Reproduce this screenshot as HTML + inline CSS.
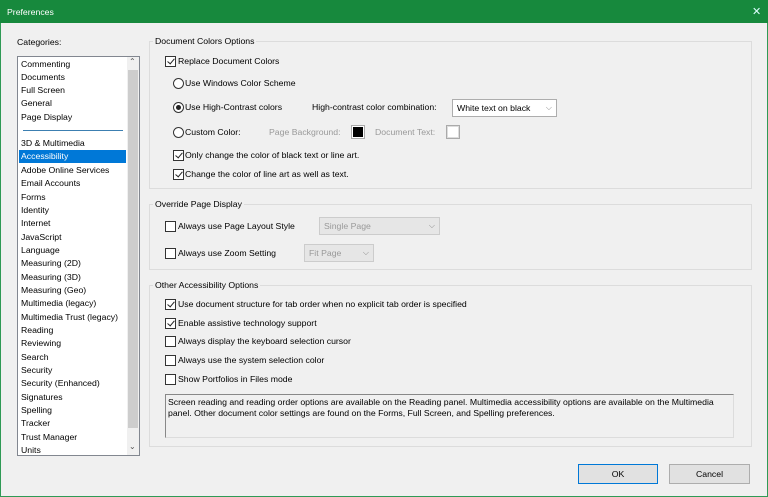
<!DOCTYPE html>
<html><head><style>
*{margin:0;padding:0;box-sizing:border-box}
body{width:768px;height:497px;background:#f0f0f0;font-family:"Liberation Sans",sans-serif;font-size:8.7px;color:#000;position:relative;overflow:hidden}
.a{position:absolute;white-space:nowrap}
.title{left:0;top:0;width:768px;height:23px;background:#17893d;color:#fff;font-size:8.7px;padding:7px 0 0 7px}
.frame{left:0;top:23px;width:768px;height:474px;border:1px solid #2f9a55;border-top:none}
.list{left:17px;top:56px;width:123px;height:400px;background:#fff;border:1px solid #828790}
.it{position:absolute;left:3px;height:13px;line-height:13px}
.sb{left:127px;top:57px;width:12px;height:398px;background:#f0f0f0}
.thumb{left:128px;top:70px;width:10px;height:358px;background:#cdcdcd}
.grp{position:absolute;border:1px solid #dcdcdc}
.gl{position:absolute;background:#f0f0f0;padding:0 2px}
.cb{position:absolute;width:11px;height:11px;border:1px solid #333;background:#fff}
.cb.k::after{content:"";position:absolute;left:3px;top:0px;width:3px;height:6px;border:solid #222;border-width:0 1.2px 1.2px 0;transform:rotate(40deg)}
.rb{position:absolute;width:11px;height:11px;border:1px solid #333;border-radius:50%;background:#fff}
.rb.k::after{content:"";position:absolute;left:2px;top:2px;width:5px;height:5px;border-radius:50%;background:#222}
.sel{position:absolute;border:1px solid #adadad;background:#fff;height:18px;padding:3px 0 0 4px}
.sel.d{background:#e6e6e6;border-color:#ccc;color:#999}
.arr{position:absolute;right:4px;top:3px;font-size:8px;color:#888}
.btn{position:absolute;height:20px;border:1px solid #adadad;background:#e1e1e1;text-align:center;line-height:18px}
.gray{color:#999}
</style></head><body>
<div class="a title">Preferences</div>
<div class="a" style="left:752px;top:5px;color:#dff;font-size:11px">✕</div>
<div class="a frame"></div>
<div class="a" style="left:17px;top:37px">Categories:</div>
<div class="a list">
<div class="it" style="top:1px">Commenting</div>
<div class="it" style="top:14px">Documents</div>
<div class="it" style="top:27px">Full Screen</div>
<div class="it" style="top:40px">General</div>
<div class="it" style="top:54px">Page Display</div>
<div style="position:absolute;left:5px;top:73px;width:100px;height:1px;background:#3c7fb1"></div>
<div class="it" style="top:80px">3D &amp; Multimedia</div>
<div class="it" style="top:93px;left:1px;width:107px;background:#0078d7;color:#fff;padding-left:2px">Accessibility</div>
<div class="it" style="top:107px">Adobe Online Services</div>
<div class="it" style="top:120px">Email Accounts</div>
<div class="it" style="top:134px">Forms</div>
<div class="it" style="top:147px">Identity</div>
<div class="it" style="top:160px">Internet</div>
<div class="it" style="top:174px">JavaScript</div>
<div class="it" style="top:187px">Language</div>
<div class="it" style="top:200px">Measuring (2D)</div>
<div class="it" style="top:214px">Measuring (3D)</div>
<div class="it" style="top:227px">Measuring (Geo)</div>
<div class="it" style="top:240px">Multimedia (legacy)</div>
<div class="it" style="top:254px">Multimedia Trust (legacy)</div>
<div class="it" style="top:267px">Reading</div>
<div class="it" style="top:280px">Reviewing</div>
<div class="it" style="top:294px">Search</div>
<div class="it" style="top:307px">Security</div>
<div class="it" style="top:320px">Security (Enhanced)</div>
<div class="it" style="top:334px">Signatures</div>
<div class="it" style="top:347px">Spelling</div>
<div class="it" style="top:360px">Tracker</div>
<div class="it" style="top:374px">Trust Manager</div>
<div class="it" style="top:387px">Units</div>
</div>
<div class="a sb"></div><div class="a thumb"></div>
<div class="a" style="left:129px;top:57px;font-size:8px;color:#555">⌃</div>
<div class="a" style="left:129px;top:442px;font-size:8px;color:#555">⌄</div>

<div class="grp" style="left:149px;top:41px;width:603px;height:148px"></div>
<div class="gl" style="left:153px;top:36px">Document Colors Options</div>
<div class="cb k" style="left:165px;top:56px"></div><div class="a" style="left:178px;top:56px">Replace Document Colors</div>
<div class="rb" style="left:173px;top:78px"></div><div class="a" style="left:185px;top:78px">Use Windows Color Scheme</div>
<div class="rb k" style="left:173px;top:102px"></div><div class="a" style="left:185px;top:102px">Use High-Contrast colors</div>
<div class="a" style="left:312px;top:102px">High-contrast color combination:</div>
<div class="sel" style="left:452px;top:99px;width:105px">White text on black<span class="arr">⌵</span></div>
<div class="rb" style="left:173px;top:127px"></div><div class="a" style="left:185px;top:127px">Custom Color:</div>
<div class="a gray" style="left:269px;top:127px">Page Background:</div>
<div class="a" style="left:351px;top:125px;width:14px;height:14px;border:1px solid #aaa;background:#fff;padding:1px"><div style="width:10px;height:10px;background:#000"></div></div>
<div class="a gray" style="left:375px;top:127px">Document Text:</div>
<div class="a" style="left:446px;top:125px;width:14px;height:14px;border:1px solid #aaa;background:#ddd;padding:1px"><div style="width:10px;height:10px;background:#fff"></div></div>
<div class="cb k" style="left:173px;top:150px"></div><div class="a" style="left:185px;top:150px">Only change the color of black text or line art.</div>
<div class="cb k" style="left:173px;top:169px"></div><div class="a" style="left:185px;top:169px">Change the color of line art as well as text.</div>

<div class="grp" style="left:149px;top:204px;width:603px;height:66px"></div>
<div class="gl" style="left:153px;top:199px">Override Page Display</div>
<div class="cb" style="left:165px;top:221px"></div><div class="a" style="left:178px;top:221px">Always use Page Layout Style</div>
<div class="sel d" style="left:319px;top:217px;width:121px">Single Page<span class="arr">⌵</span></div>
<div class="cb" style="left:165px;top:248px"></div><div class="a" style="left:178px;top:248px">Always use Zoom Setting</div>
<div class="sel d" style="left:304px;top:244px;width:70px">Fit Page<span class="arr">⌵</span></div>

<div class="grp" style="left:149px;top:285px;width:603px;height:162px"></div>
<div class="gl" style="left:153px;top:280px">Other Accessibility Options</div>
<div class="cb k" style="left:165px;top:299px"></div><div class="a" style="left:178px;top:299px">Use document structure for tab order when no explicit tab order is specified</div>
<div class="cb k" style="left:165px;top:318px"></div><div class="a" style="left:178px;top:318px">Enable assistive technology support</div>
<div class="cb" style="left:165px;top:336px"></div><div class="a" style="left:178px;top:336px">Always display the keyboard selection cursor</div>
<div class="cb" style="left:165px;top:355px"></div><div class="a" style="left:178px;top:355px">Always use the system selection color</div>
<div class="cb" style="left:165px;top:374px"></div><div class="a" style="left:178px;top:374px">Show Portfolios in Files mode</div>
<div class="a" style="left:165px;top:394px;width:569px;height:44px;border:1px solid #dcdcdc;border-top-color:#888;border-left-color:#888;padding:2px 2px;white-space:normal;line-height:10.5px">Screen reading and reading order options are available on the Reading panel. Multimedia accessibility options are available on the Multimedia panel. Other document color settings are found on the Forms, Full Screen, and Spelling preferences.</div>

<div class="btn" style="left:578px;top:464px;width:80px;border-color:#0078d7">OK</div>
<div class="btn" style="left:669px;top:464px;width:81px">Cancel</div>
</body></html>
